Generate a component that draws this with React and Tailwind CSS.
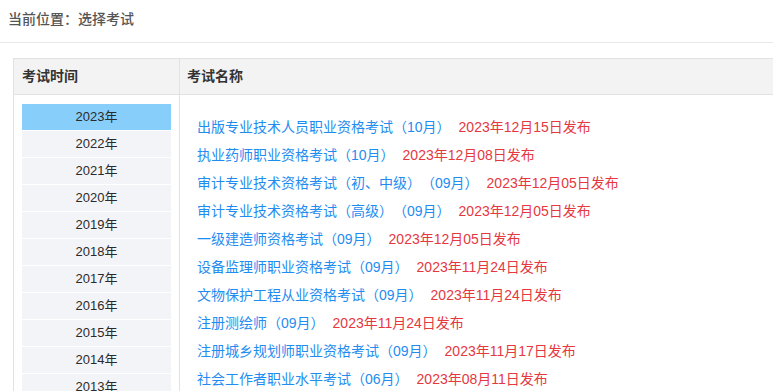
import React from "react";

const years = ["2023年","2022年","2021年","2020年","2019年","2018年","2017年","2016年","2015年","2014年","2013年"];
const exams = [
  ["出版专业技术人员职业资格考试（10月）", "2023年12月15日发布"],
  ["执业药师职业资格考试（10月）", "2023年12月08日发布"],
  ["审计专业技术资格考试（初、中级）（09月）", "2023年12月05日发布"],
  ["审计专业技术资格考试（高级）（09月）", "2023年12月05日发布"],
  ["一级建造师资格考试（09月）", "2023年12月05日发布"],
  ["设备监理师职业资格考试（09月）", "2023年11月24日发布"],
  ["文物保护工程从业资格考试（09月）", "2023年11月24日发布"],
  ["注册测绘师（09月）", "2023年11月24日发布"],
  ["注册城乡规划师职业资格考试（09月）", "2023年11月17日发布"],
  ["社会工作者职业水平考试（06月）", "2023年08月11日发布"],
];

export default function App() {
  return (
    <div className="w-[773px] h-[391px] overflow-hidden bg-white font-['Liberation_Sans','Noto_Sans_CJK_SC',sans-serif] [text-spacing-trim:space-all]">
      <div className="h-[43px] border-b border-[#e8e8e8] pl-[8px] flex items-center text-[14px] font-medium text-[#555] pb-[3px]">
        当前位置：选择考试
      </div>
      <div className="ml-[13px] mt-[15px] border-l border-t border-[#e2e2e2]">
        <div className="flex h-[36px] bg-[#f3f3f3] border-b border-[#e2e2e2] text-[14px] font-bold text-[#333]">
          <div className="w-[166px] border-r border-[#e2e2e2] pl-[8px] flex items-center">考试时间</div>
          <div className="flex-1 pl-[7px] flex items-center">考试名称</div>
        </div>
        <div className="flex">
          <div className="w-[166px] border-r border-[#e2e2e2] pt-[9px] pl-[8px] pr-[8px]">
            {years.map((y, i) => (
              <div
                key={y}
                className={
                  "h-[26px] mb-px flex items-center justify-center text-[13px] text-[#2b2b2b] " +
                  (i === 0 ? "bg-[#87cefa]" : "bg-[#f3f4f8]")
                }
              >
                {y}
              </div>
            ))}
          </div>
          <div className="flex-1 pl-[17px] pt-[18px] text-[14px] leading-[28px]">
            {exams.map(([name, date]) => (
              <div key={name} className="whitespace-nowrap">
                <span className="text-[#1f8cf0]">{name}</span>
                <span className="ml-[8px] text-[#e5383f]">{date}</span>
              </div>
            ))}
          </div>
        </div>
      </div>
    </div>
  );
}
